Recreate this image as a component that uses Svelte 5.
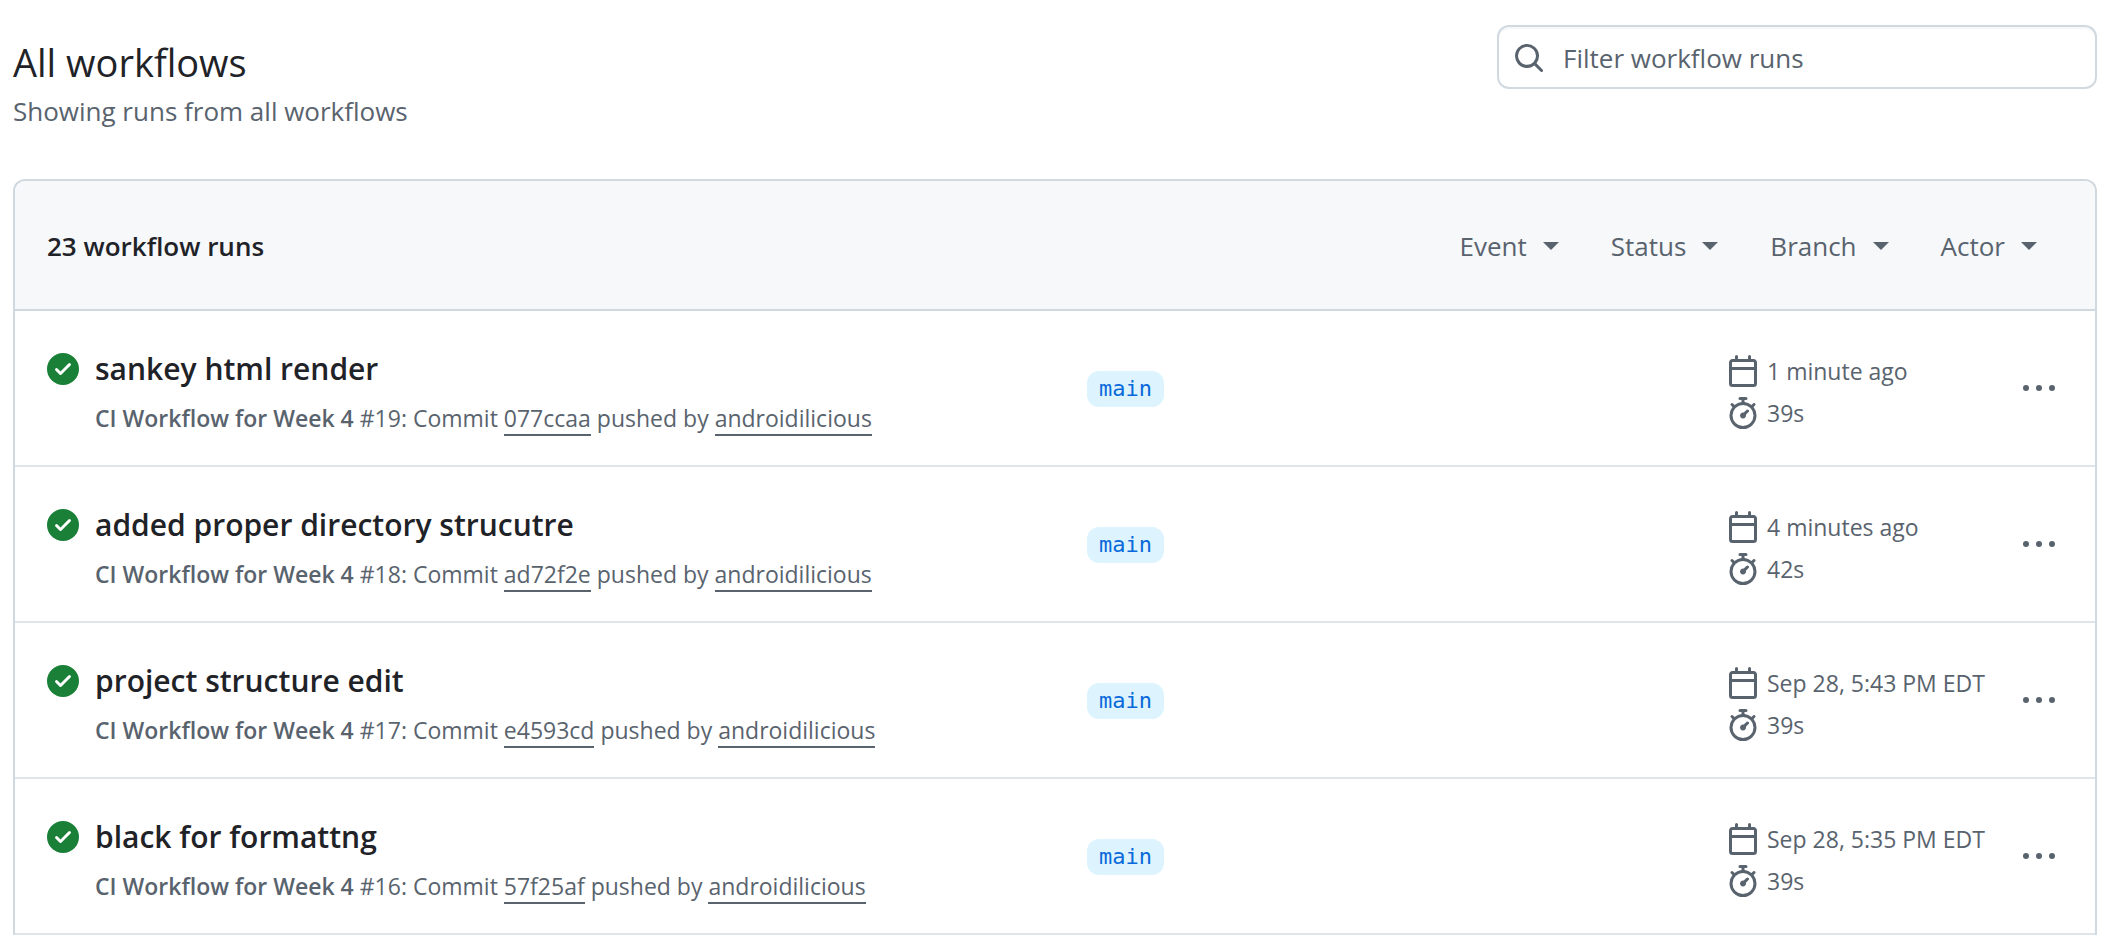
<script>
  const filters = ['Event', 'Status', 'Branch', 'Actor'];

  const runs = [
    { title: 'sankey html render', number: 19, commit: '077ccaa', when: '1 minute ago', duration: '39s' },
    { title: 'added proper directory strucutre', number: 18, commit: 'ad72f2e', when: '4 minutes ago', duration: '42s' },
    { title: 'project structure edit', number: 17, commit: 'e4593cd', when: 'Sep 28, 5:43 PM EDT', duration: '39s' },
    { title: 'black for formattng', number: 16, commit: '57f25af', when: 'Sep 28, 5:35 PM EDT', duration: '39s' }
  ];

  const icons = {
    search:
      'M10.68 11.74a6 6 0 0 1-7.922-8.982 6 6 0 0 1 8.982 7.922l3.04 3.04a.749.749 0 0 1-.326 1.275.749.749 0 0 1-.734-.215ZM11.5 7a4.499 4.499 0 1 0-8.997 0A4.499 4.499 0 0 0 11.5 7Z',
    success:
      'M8 16A8 8 0 1 1 8 0a8 8 0 0 1 0 16Zm3.78-9.72a.751.751 0 0 0-.018-1.042.751.751 0 0 0-1.042-.018L6.75 9.19 5.28 7.72a.751.751 0 0 0-1.042.018.751.751 0 0 0-.018 1.042l2 2a.75.75 0 0 0 1.06 0Z',
    calendar:
      'M4.75 0a.75.75 0 0 1 .75.75V2h5V.75a.75.75 0 0 1 1.5 0V2h1.25c.966 0 1.75.784 1.75 1.75v10.5A1.75 1.75 0 0 1 13.25 16H2.75A1.75 1.75 0 0 1 1 14.25V3.75C1 2.784 1.784 2 2.75 2H4V.75A.75.75 0 0 1 4.75 0ZM2.5 7.5v6.75c0 .138.112.25.25.25h10.5a.25.25 0 0 0 .25-.25V7.5Zm10.75-4H2.75a.25.25 0 0 0-.25.25V6h11V3.75a.25.25 0 0 0-.25-.25Z',
    stopwatch:
      'M5.75.75A.75.75 0 0 1 6.5 0h3a.75.75 0 0 1 0 1.5h-.75v1l-.001.041a6.724 6.724 0 0 1 3.464 1.435l.007-.006.75-.75a.749.749 0 0 1 1.275.326.749.749 0 0 1-.215.734l-.75.75-.006.007a6.75 6.75 0 1 1-10.548 0L2.72 5.03l-.75-.75a.751.751 0 0 1 .018-1.042.751.751 0 0 1 1.042-.018l.75.75.007.006A6.72 6.72 0 0 1 7.25 2.541V1.5H6.5a.75.75 0 0 1-.75-.75ZM8 14.5a5.25 5.25 0 1 0-.001-10.501A5.25 5.25 0 0 0 8 14.5Zm.389-6.7 1.33-1.33a.75.75 0 1 1 1.061 1.06L9.45 8.861A1.503 1.503 0 0 1 8 10.75a1.499 1.499 0 1 1 .389-2.95Z',
    more:
      'M8 9a1.5 1.5 0 1 0 0-3 1.5 1.5 0 0 0 0 3ZM1.5 9a1.5 1.5 0 1 0 0-3 1.5 1.5 0 0 0 0 3Zm13 0a1.5 1.5 0 1 0 0-3 1.5 1.5 0 0 0 0 3Z'
  };
</script>

{#snippet icon(name)}
  <svg class="icon" viewBox="0 0 16 16" aria-hidden="true"><path d={icons[name]} /></svg>
{/snippet}

<main>
  <header class="top">
    <div class="heading">
      <h1>All workflows</h1>
      <p>Showing runs from all workflows</p>
    </div>
    <label class="search">
      {@render icon('search')}
      <input type="text" placeholder="Filter workflow runs" aria-label="Filter workflow runs" />
    </label>
  </header>

  <section class="card">
    <div class="card-head">
      <h2>23 workflow runs</h2>
      <div class="filters">
        {#each filters as filter}
          <button type="button" class="filter" aria-haspopup="menu">{filter}<span class="caret"></span></button>
        {/each}
      </div>
    </div>

    <ul class="runs">
      {#each runs as run}
        <li class="run">
          <div class="summary">
            <span class="status">{@render icon('success')}</span>
            <div class="about">
              <a class="title" href="#run-{run.number}">{run.title}</a>
              <p class="detail">
                <b>CI Workflow for Week 4</b> #{run.number}: Commit <a href="#commit-{run.commit}">{run.commit}</a> pushed by <a href="#androidilicious">androidilicious</a>
              </p>
            </div>
          </div>
          <div class="branch-cell"><a class="branch" href="#main">main</a></div>
          <div class="end">
            <div class="meta">
              <div class="fact">{@render icon('calendar')}<span>{run.when}</span></div>
              <div class="fact">{@render icon('stopwatch')}<span>{run.duration}</span></div>
            </div>
            <button type="button" class="more" aria-label="Show options">{@render icon('more')}</button>
          </div>
        </li>
      {/each}
    </ul>
  </section>
</main>

<style>
  :global(body) {
    background: #ffffff;
  }

  main {
    box-sizing: border-box;
    padding: 25px 26px 0 13px;
    color: #1f2328;
    font-family: 'Open Sans', 'Noto Sans', sans-serif;
    font-size: 26px;
  }

  h1,
  h2,
  p,
  ul {
    margin: 0;
    padding: 0;
    font-size: inherit;
  }

  button {
    border: 0;
    padding: 0;
    background: none;
    color: #59636e;
    font: inherit;
    cursor: pointer;
  }

  a {
    color: inherit;
    text-decoration: none;
  }

  .icon {
    display: block;
    flex: none;
    width: 32px;
    height: 32px;
    fill: currentColor;
  }

  .top {
    display: flex;
    justify-content: space-between;
    align-items: flex-start;
    gap: 32px;
    padding-bottom: 48px;
  }

  .heading {
    padding-top: 8px;
  }

  h1 {
    font-size: 38px;
    font-weight: 400;
    line-height: 58px;
  }

  .heading p {
    color: #59636e;
    line-height: 40px;
  }

  .search {
    box-sizing: border-box;
    display: flex;
    align-items: center;
    gap: 18px;
    width: 600px;
    height: 64px;
    padding: 2px 14px 0;
    border: 2px solid #d1d9e0;
    border-radius: 12px;
    box-shadow: inset 0 2px 0 #f5f7f9;
    color: #59636e;
  }

  .search input {
    flex: 1;
    min-width: 0;
    border: 0;
    padding: 0;
    outline: 0;
    background: none;
    color: #1f2328;
    font: inherit;
  }

  .search input::placeholder {
    color: #59636e;
    opacity: 1;
  }

  .card {
    border: 2px solid #d1d9e0;
    border-bottom: 0;
    border-radius: 12px 12px 0 0;
  }

  .card-head {
    display: flex;
    justify-content: space-between;
    align-items: center;
    padding: 43px 58px 41px 32px;
    border-bottom: 2px solid #d1d9e0;
    border-radius: 10px 10px 0 0;
    background: #f6f8fa;
    line-height: 44px;
  }

  h2 {
    font-weight: 600;
  }

  .filters {
    display: flex;
    gap: 52px;
  }

  .filter {
    display: flex;
    align-items: center;
    gap: 16px;
    line-height: 44px;
  }

  .caret {
    border: 8px solid transparent;
    border-top-color: currentColor;
    border-bottom: 0;
  }

  .runs {
    list-style: none;
  }

  .run {
    display: grid;
    grid-template-columns: 65fr 40fr 21fr;
    align-items: center;
    padding: 30px 32px 26px;
    border-bottom: 2px solid #dfe4e9;
  }

  .summary {
    display: flex;
    gap: 16px;
    min-width: 0;
  }

  .status {
    padding-top: 12px;
    color: #1a7f37;
  }

  .about {
    min-width: 0;
  }

  .title {
    display: block;
    font-size: 30px;
    font-weight: 600;
    line-height: 56px;
  }

  .detail {
    color: #59636e;
    font-size: 23px;
    line-height: 42px;
  }

  .detail b {
    font-weight: 600;
  }

  .detail a {
    border-bottom: 2px solid #59636e;
  }

  .branch-cell {
    display: flex;
    padding-bottom: 2px;
  }

  .branch {
    padding: 0 12px;
    border-radius: 12px;
    background: #ddf4ff;
    color: #0969da;
    font-family: 'DejaVu Sans Mono', monospace;
    font-size: 22px;
    line-height: 36px;
  }

  .end {
    display: flex;
    justify-content: space-between;
    align-items: center;
    padding: 0 8px 2px 0;
  }

  .meta {
    display: grid;
    gap: 10px;
    padding-top: 6px;
  }

  .fact {
    display: flex;
    align-items: center;
    gap: 8px;
    height: 32px;
    color: #59636e;
    font-size: 23px;
    white-space: nowrap;
  }
</style>
